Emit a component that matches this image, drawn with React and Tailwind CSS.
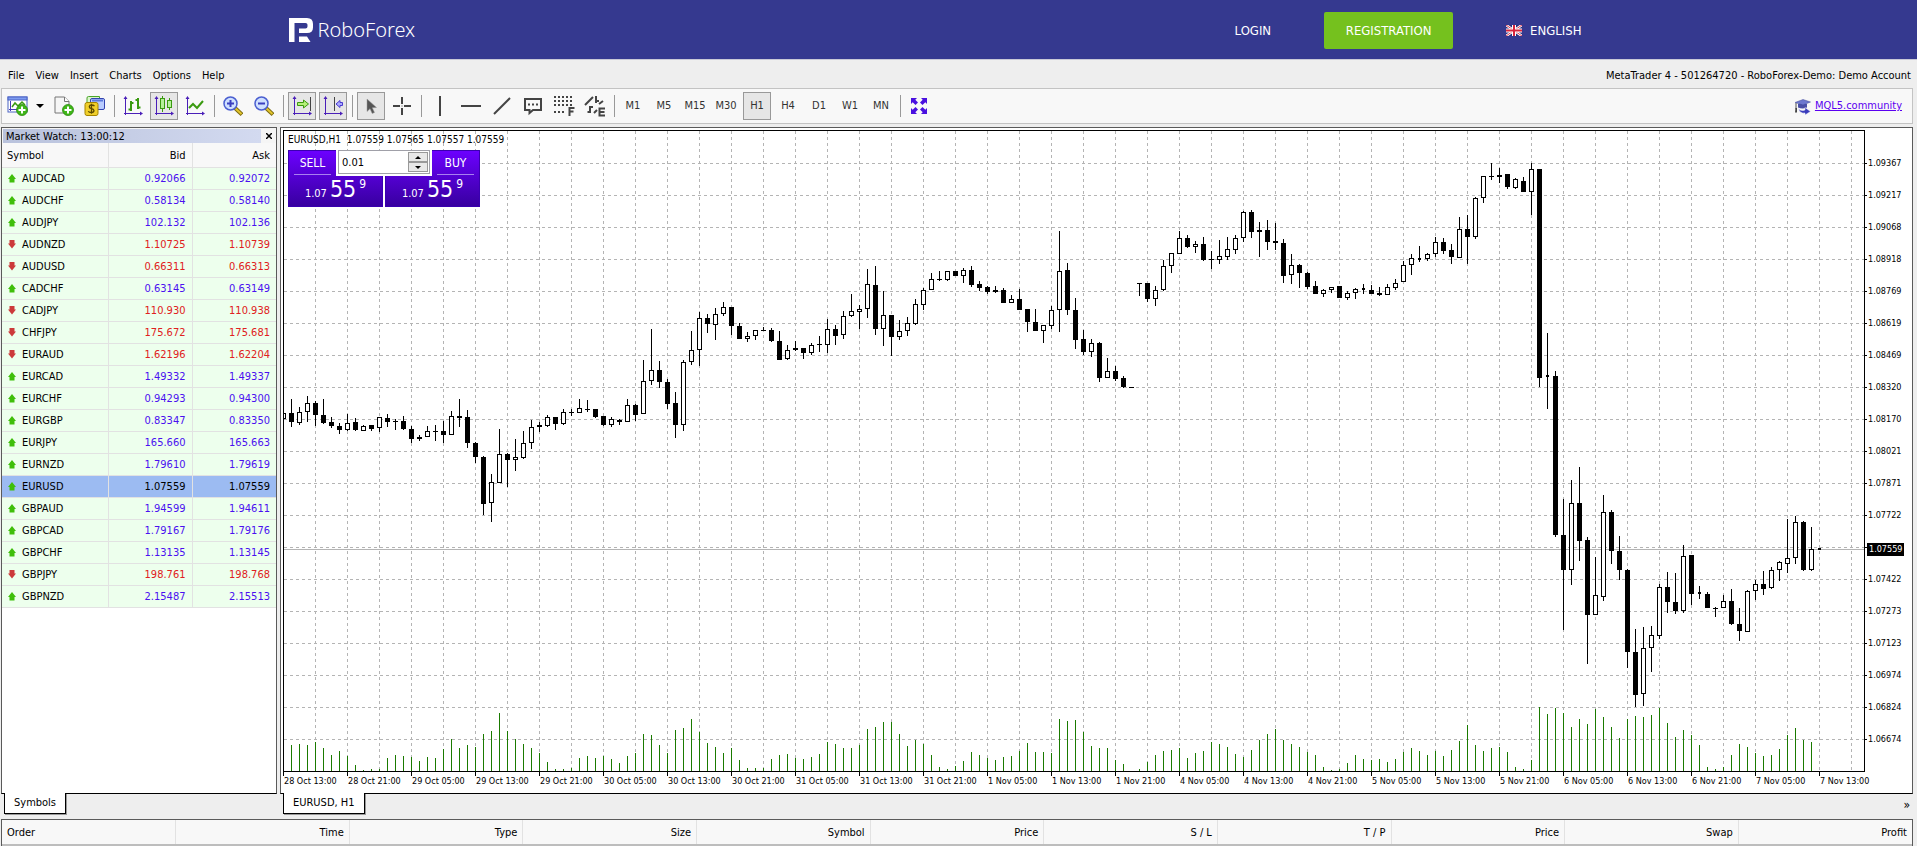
import React, { useState } from 'react';
import clsx from 'clsx';

const QUOTES = [
    ['AUDCAD', '0.92066', '0.92072', 'up'],
    ['AUDCHF', '0.58134', '0.58140', 'up'],
    ['AUDJPY', '102.132', '102.136', 'up'],
    ['AUDNZD', '1.10725', '1.10739', 'down'],
    ['AUDUSD', '0.66311', '0.66313', 'down'],
    ['CADCHF', '0.63145', '0.63149', 'up'],
    ['CADJPY', '110.930', '110.938', 'down'],
    ['CHFJPY', '175.672', '175.681', 'down'],
    ['EURAUD', '1.62196', '1.62204', 'down'],
    ['EURCAD', '1.49332', '1.49337', 'up'],
    ['EURCHF', '0.94293', '0.94300', 'up'],
    ['EURGBP', '0.83347', '0.83350', 'up'],
    ['EURJPY', '165.660', '165.663', 'up'],
    ['EURNZD', '1.79610', '1.79619', 'up'],
    ['EURUSD', '1.07559', '1.07559', 'up'],
    ['GBPAUD', '1.94599', '1.94611', 'up'],
    ['GBPCAD', '1.79167', '1.79176', 'up'],
    ['GBPCHF', '1.13135', '1.13145', 'up'],
    ['GBPJPY', '198.761', '198.768', 'down'],
    ['GBPNZD', '2.15487', '2.15513', 'up'],
];

const PRICES = [
    '1.09367', '1.09217', '1.09068', '1.08918', '1.08769', '1.08619', '1.08469', '1.08320', '1.08170', '1.08021',
    '1.07871', '1.07722', '1.07572', '1.07422', '1.07273', '1.07123', '1.06974', '1.06824', '1.06674',
];

const TIMES = [
    '28 Oct 13:00', '28 Oct 21:00', '29 Oct 05:00', '29 Oct 13:00', '29 Oct 21:00', '30 Oct 05:00', '30 Oct 13:00',
    '30 Oct 21:00', '31 Oct 05:00', '31 Oct 13:00', '31 Oct 21:00', '1 Nov 05:00', '1 Nov 13:00', '1 Nov 21:00',
    '4 Nov 05:00', '4 Nov 13:00', '4 Nov 21:00', '5 Nov 05:00', '5 Nov 13:00', '5 Nov 21:00', '6 Nov 05:00',
    '6 Nov 13:00', '6 Nov 21:00', '7 Nov 05:00', '7 Nov 13:00',
];

const COLUMNS = ['Order', 'Time', 'Type', 'Size', 'Symbol', 'Price', 'S / L', 'T / P', 'Price', 'Swap', 'Profit'];

// [high, body top, body bottom, low, kind] in chart units; kind: 1 = rising, 0 = falling, 2 = narrow body
const CANDLES = [
    [282, 282, 288, 288, 1], [268, 282, 291, 296, 0], [276, 281, 292, 294, 1], [265, 272, 281, 291, 1], [270, 272, 284, 295, 0],
    [268, 284, 292, 293, 0], [286, 291, 295, 297, 0], [292, 295, 299, 303, 0], [283, 292, 299, 300, 1], [287, 291, 299, 300, 0],
    [294, 295, 300, 300, 1], [294, 294, 298, 300, 0], [286, 286, 297, 301, 1], [283, 287, 291, 296, 0], [288, 290, 291, 299, 0],
    [285, 290, 298, 299, 0], [295, 298, 308, 312, 0], [304, 306, 308, 310, 0], [295, 300, 306, 306, 1], [294, 300, 301, 310, 0],
    [290, 300, 304, 312, 0], [280, 285, 304, 304, 1], [268, 285, 287, 296, 0], [279, 286, 312, 317, 0], [311, 312, 326, 332, 0],
    [325, 326, 373, 384, 0], [343, 351, 372, 391, 1], [298, 323, 352, 352, 1], [322, 323, 329, 356, 0], [308, 326, 329, 340, 1],
    [300, 312, 327, 328, 1], [289, 296, 312, 318, 1], [291, 294, 296, 301, 0], [284, 286, 295, 296, 1], [286, 286, 293, 299, 0],
    [278, 281, 293, 294, 1], [278, 281, 282, 285, 0], [268, 277, 282, 282, 1], [269, 278, 279, 281, 0], [278, 278, 286, 287, 0],
    [285, 285, 294, 295, 0], [286, 288, 294, 296, 1], [288, 289, 291, 294, 0], [268, 274, 291, 291, 1], [273, 274, 284, 290, 0],
    [229, 250, 283, 283, 1], [198, 239, 250, 254, 1], [230, 239, 251, 257, 0], [248, 251, 273, 278, 0], [261, 272, 294, 307, 0],
    [229, 231, 294, 300, 1], [200, 219, 231, 234, 1], [181, 187, 219, 235, 1], [183, 187, 193, 202, 0], [177, 183, 194, 209, 1],
    [171, 176, 183, 185, 1], [176, 176, 195, 204, 0], [192, 195, 208, 208, 0], [201, 205, 208, 211, 1], [199, 199, 205, 209, 1],
    [196, 199, 200, 200, 0], [197, 199, 210, 211, 0], [200, 210, 229, 229, 0], [214, 219, 228, 229, 1], [210, 217, 219, 220, 0],
    [217, 217, 222, 228, 0], [212, 214, 222, 224, 1], [205, 213, 214, 221, 0], [188, 198, 214, 222, 1], [194, 198, 205, 214, 0],
    [180, 185, 204, 208, 1], [163, 180, 185, 186, 1], [174, 178, 181, 198, 1], [138, 153, 178, 187, 1], [135, 154, 198, 204, 0],
    [160, 184, 198, 215, 1], [184, 184, 206, 225, 0], [189, 200, 206, 209, 1], [186, 192, 200, 205, 1], [168, 173, 193, 194, 1],
    [157, 159, 174, 179, 1], [142, 148, 159, 159, 1], [140, 148, 149, 150, 0], [140, 140, 149, 150, 1], [140, 140, 145, 145, 0],
    [137, 139, 145, 152, 1], [135, 139, 154, 156, 0], [150, 153, 157, 160, 0], [155, 156, 161, 163, 0], [155, 159, 161, 162, 0],
    [157, 159, 172, 172, 0], [164, 168, 172, 172, 1], [158, 168, 179, 179, 0], [178, 178, 191, 201, 0], [178, 191, 200, 200, 0],
    [194, 194, 200, 212, 1], [175, 179, 195, 198, 1], [100, 140, 179, 201, 1], [132, 139, 179, 184, 0], [167, 179, 209, 218, 0],
    [199, 208, 221, 224, 0], [208, 212, 221, 226, 1], [211, 212, 247, 251, 0], [227, 240, 247, 247, 1], [235, 240, 248, 250, 0],
    [245, 247, 256, 257, 0], [256, 256, 257, 257, 0], [152, 152, 153, 165, 0], [152, 152, 168, 171, 0], [155, 159, 168, 175, 1],
    [129, 135, 159, 160, 1], [122, 122, 135, 142, 1], [100, 107, 123, 123, 1], [104, 107, 116, 117, 0], [110, 113, 116, 122, 1],
    [106, 113, 129, 130, 0], [120, 128, 129, 138, 0], [109, 125, 129, 133, 1], [106, 118, 126, 129, 1], [104, 107, 119, 123, 1],
    [80, 81, 107, 111, 1], [79, 81, 101, 107, 0], [91, 99, 101, 126, 0], [89, 99, 111, 119, 0], [92, 110, 112, 119, 0],
    [108, 112, 145, 152, 0], [123, 134, 144, 153, 1], [133, 134, 142, 157, 0], [141, 142, 156, 158, 0], [150, 155, 163, 163, 0],
    [158, 159, 163, 166, 1], [156, 156, 159, 162, 1], [155, 155, 167, 167, 0], [160, 162, 167, 169, 1], [157, 158, 162, 168, 1],
    [153, 157, 159, 163, 2], [154, 159, 163, 163, 0], [156, 162, 164, 165, 0], [153, 156, 164, 164, 1], [148, 152, 157, 159, 1],
    [130, 134, 151, 151, 1], [123, 127, 134, 144, 1], [115, 127, 129, 131, 2], [122, 123, 128, 130, 1], [106, 111, 123, 126, 1],
    [107, 111, 120, 123, 0], [113, 119, 126, 133, 0], [86, 98, 127, 127, 1], [84, 98, 106, 133, 0], [66, 67, 106, 108, 1],
    [45, 45, 67, 72, 1], [32, 45, 46, 49, 0], [37, 44, 46, 52, 0], [43, 43, 56, 58, 0], [47, 48, 57, 58, 1],
    [46, 50, 61, 61, 0], [32, 38, 61, 84, 1], [38, 38, 247, 256, 0], [202, 244, 246, 278, 2], [240, 245, 404, 406, 0],
    [368, 404, 439, 499, 0], [349, 372, 439, 454, 1], [336, 372, 410, 430, 0], [406, 409, 484, 533, 0], [426, 464, 484, 484, 1],
    [364, 381, 466, 470, 1], [379, 381, 420, 433, 0], [405, 420, 439, 449, 0], [438, 439, 521, 537, 0], [498, 521, 564, 576, 0],
    [496, 517, 563, 575, 1], [495, 504, 517, 541, 1], [453, 456, 505, 508, 1], [441, 456, 471, 482, 0], [442, 471, 480, 483, 0],
    [414, 425, 480, 482, 1], [424, 424, 463, 474, 0], [455, 461, 463, 468, 2], [461, 463, 477, 477, 0], [476, 477, 478, 486, 0],
    [464, 470, 477, 477, 1], [458, 470, 493, 494, 0], [477, 493, 500, 510, 0], [459, 460, 501, 501, 1], [449, 453, 460, 469, 1],
    [440, 453, 458, 464, 0], [436, 439, 457, 458, 1], [430, 431, 439, 450, 1], [388, 427, 433, 442, 1], [385, 391, 427, 433, 1],
    [390, 391, 439, 440, 0], [396, 418, 439, 440, 1], [417, 417, 419, 419, 2],
];

const VOLUMES = [
    0, 26, 27, 26, 29, 23, 16, 20, 15, 6, 1, 2, 2, 13, 16, 15, 14, 10, 14, 13, 22, 32, 23, 26, 24, 37, 40, 58, 40, 32, 27, 23,
    18, 9, 2, 2, 3, 13, 15, 13, 15, 12, 8, 15, 18, 37, 36, 26, 18, 41, 43, 52, 39, 28, 24, 18, 23, 11, 3, 3, 3, 12, 16, 17,
    13, 12, 14, 17, 29, 27, 23, 23, 26, 42, 44, 49, 49, 37, 25, 31, 27, 16, 4, 2, 5, 10, 19, 16, 13, 11, 14, 15, 20, 28, 19,
    19, 18, 52, 50, 51, 39, 25, 23, 23, 11, 7, 0, 2, 9, 16, 20, 21, 23, 13, 18, 20, 29, 27, 24, 17, 14, 21, 31, 37, 42, 31,
    27, 24, 19, 16, 4, 1, 2, 8, 16, 12, 11, 12, 9, 12, 19, 23, 20, 16, 20, 15, 21, 30, 46, 26, 20, 23, 24, 19, 4, 2, 11, 64,
    57, 63, 58, 44, 52, 47, 62, 54, 44, 33, 52, 55, 54, 56, 63, 48, 34, 41, 36, 26, 4, 2, 4, 16, 27, 24, 18, 15, 16, 22, 36,
    43, 31, 29, 0,
];

/* ---------- toolbar icons ---------- */

const Plus = ({ cx, cy }) => (
    <g>
        <circle cx={cx} cy={cy} r="5.5" fill="#3fb618" stroke="#2a8a0c" strokeWidth="0.8" />
        <path d={`M${cx - 3.5} ${cy}h7M${cx} ${cy - 3.5}v7`} stroke="#fff" strokeWidth="2" />
    </g>
);

const NewChartIcon = () => (
    <svg width="22" height="20" viewBox="0 0 22 20">
        <rect x="1" y="1" width="19" height="15" fill="#fff" stroke="#4b63c4" />
        <rect x="1" y="1" width="19" height="3" fill="#7f9cf0" stroke="#4b63c4" />
        <path d="M3.5 5v10M2 13.5h16" stroke="#4a3ab8" fill="none" />
        <path d="M5 11l3-4 3 3 4-4 3 3" stroke="#3a9a10" strokeWidth="1.5" fill="none" />
        <Plus cx={15} cy={14} />
    </svg>
);

const NewOrderIcon = () => (
    <svg width="20" height="20" viewBox="0 0 20 20">
        <path d="M1 1h9.500l4.500 4.500V17H1z" fill="#f6f6f6" stroke="#777" />
        <path d="M10.500 1v4.500H15" fill="#fff" stroke="#777" />
        <Plus cx={14} cy={14} />
    </svg>
);

const TradeIcon = () => (
    <svg width="22" height="20" viewBox="0 0 22 20">
        <path d="M3 7V2q0-1.500 1.500-1.500h11V8z" fill="#d9f5c9" stroke="#4aa52a" />
        <rect x="6.500" y="2.500" width="14" height="11" rx="1.500" fill="#b9ccff" stroke="#3344b0" />
        <path d="M8 4.500h11" stroke="#5a78dc" strokeWidth="2" />
        <rect x="1" y="6.500" width="13" height="13" rx="2" fill="#f0cf2a" stroke="#a58400" />
        <path d="M10.500 10.200q-1-1.200-3-1.200t-2.200 1.700q0 1.500 2.200 1.900t2.500 2q0 1.900-2.500 1.900t-3.200-1.300M7.500 7.800v10" fill="none" stroke="#5c4a00" strokeWidth="1.300" />
    </svg>
);

const Axes = () => (
    <>
        <path d="M2.500 2v17M1 17.500h17" stroke="#4a1fb8" fill="none" />
        <path d="M2.500 0l2 3h-4zM20 17.500l-3 2v-4z" fill="#4a1fb8" />
    </>
);

const BarsIcon = () => (
    <svg width="20" height="20" viewBox="0 0 20 20">
        <Axes />
        <path d="M8 5v10M5.500 13.500H8M8 7h2.500M15 2v11M12.500 4H15M15 11.500h2.500" stroke="#3a9a10" strokeWidth="2" fill="none" />
    </svg>
);

const CandlesIcon = () => (
    <svg width="20" height="20" viewBox="0 0 20 20">
        <Axes />
        <path d="M8.500 0v16M15.500 2v12" stroke="#3a9a10" />
        <rect x="6.500" y="2.500" width="4" height="10" fill="#b5f09a" stroke="#3a9a10" />
        <rect x="13.500" y="4.500" width="4" height="7" fill="#b5f09a" stroke="#3a9a10" />
    </svg>
);

const LineIcon = () => (
    <svg width="20" height="20" viewBox="0 0 20 20">
        <Axes />
        <path d="M4 12l4-4 4 4 6-7" stroke="#3a9a10" strokeWidth="2" fill="none" />
    </svg>
);

const ZoomIcon = ({ plus }) => (
    <svg width="20" height="20" viewBox="0 0 20 20">
        <path d="M12 12l7 6.500" stroke="#7c6a10" strokeWidth="4" />
        <path d="M12 12l6.500 6" stroke="#e3c52c" strokeWidth="2" />
        <circle cx="7.500" cy="7.500" r="6.500" fill="#cfe0ff" stroke="#4b5fd0" strokeWidth="1.500" />
        <path d={plus ? 'M4 7.500h7M7.500 4v7' : 'M4 7.500h7'} stroke="#3a3fc0" strokeWidth="2" />
    </svg>
);

const AutoScrollIcon = () => (
    <svg width="20" height="20" viewBox="0 0 20 20">
        <Axes />
        <path d="M18.500 1v14" stroke="#444" />
        <path d="M5.500 6.500h6V4l5 4-5 4V9.500h-6z" fill="#b5f07a" stroke="#3a9a10" />
    </svg>
);

const ShiftIcon = () => (
    <svg width="20" height="20" viewBox="0 0 20 20">
        <Axes />
        <path d="M11.500 1v14" stroke="#444" />
        <path d="M19.500 6.500h-2.500V4.500l-4 3.500 4 3.500V9.500h2.500z" fill="#a9a9ff" stroke="#4a3ad0" />
    </svg>
);

const CursorIcon = () => (
    <svg width="20" height="20" viewBox="0 0 20 20">
        <path d="M6 3v12.500l3-2.800 2.200 4.800 2.300-1-2.200-4.700 4.200-.3z" fill="#555" stroke="#999" strokeWidth="0.500" />
    </svg>
);

const CrosshairIcon = () => (
    <svg width="20" height="20" viewBox="0 0 20 20">
        <path d="M10 1v7M10 12v7M1 10h7M12 10h7" stroke="#444" strokeWidth="2" />
        <rect x="9.500" y="9.500" width="1" height="1" fill="#444" />
    </svg>
);

const VLineIcon = () => <svg width="20" height="20" viewBox="0 0 20 20"><path d="M10 0v20" stroke="#444" strokeWidth="2" /></svg>;
const HLineIcon = () => <svg width="20" height="20" viewBox="0 0 20 20"><path d="M0 10h20" stroke="#444" strokeWidth="2" /></svg>;
const TrendIcon = () => <svg width="20" height="20" viewBox="0 0 20 20"><path d="M2 18L18 2" stroke="#444" strokeWidth="2" /></svg>;

const TextIcon = () => (
    <svg width="20" height="20" viewBox="0 0 20 20">
        <path d="M2 3h16v11H10l-3.500 3v-3H2z" fill="none" stroke="#444" strokeWidth="2" />
        <path d="M5 8.500h2M9 8.500h2M13 8.500h2" stroke="#444" strokeWidth="2" />
    </svg>
);

const FiboIcon = () => (
    <svg width="22" height="22" viewBox="0 0 22 22">
        <path d="M1 2h19M1 6h19M1 10h19M1 17h12" stroke="#444" strokeWidth="2" strokeDasharray="2 2" fill="none" />
        <path d="M16.500 21v-8h5M16.500 16.500h4" stroke="#444" strokeWidth="2" fill="none" />
    </svg>
);

const ObjectsIcon = () => (
    <svg width="22" height="22" viewBox="0 0 22 22">
        <path d="M1 10l8-8M12 1v7M12 6h3M6 11v7M3.500 17H6M6 12h3M15 9l4-3M10 18l3-3" stroke="#444" strokeWidth="2" fill="none" />
        <path d="M21 13.500h-5.500v7H21M15.500 17h5" stroke="#444" strokeWidth="2" fill="none" />
    </svg>
);

const FullscreenIcon = () => (
    <svg width="16" height="16" viewBox="0 0 16 16" fill="#4a10e0">
        <path d="M0 0h6L4.300 1.700 7 4.500 4.500 7 1.700 4.300 0 6zM16 0v6l-1.700-1.700L11.500 7 9 4.500l2.700-2.800L10 0zM0 16v-6l1.700 1.700L4.500 9 7 11.500l-2.700 2.800L6 16zM16 16h-6l1.700-1.700L9 11.500 11.500 9l2.800 2.700L16 10z" />
    </svg>
);

const MqlIcon = () => (
    <svg width="17" height="16" viewBox="0 0 17 16">
        <path d="M4 5v3.500q4.500 2 9 0V5z" fill="#4a50a8" />
        <path d="M9 0.500L16.500 3 9 6 1 3.500z" fill="#6d78cf" stroke="#3f4796" strokeWidth="0.500" />
        <path d="M2 4v6" stroke="#555" />
        <path d="M1.500 9h1.500v4.500H1z" fill="#444" />
        <path d="M4.500 9.500q2 3 6.500 1.500V8.500l5.500 4L11 16v-2q-5 1-6.500-4.500z" fill="#3a3cbc" stroke="#f8f8f8" strokeWidth="0.500" />
    </svg>
);

const FlagIcon = () => (
    <svg width="16" height="11" viewBox="0 0 16 11">
        <rect width="16" height="11" fill="#2b2f7c" />
        <path d="M0 0l16 11M16 0L0 11" stroke="#fff" strokeWidth="2.600" />
        <path d="M0 0l16 11M16 0L0 11" stroke="#d8243c" strokeWidth="0.900" />
        <path d="M8 0v11M0 5.500h16" stroke="#fff" strokeWidth="4" />
        <path d="M8 0v11M0 5.500h16" stroke="#d8243c" strokeWidth="2" />
    </svg>
);

const LogoMark = () => (
    <svg width="24" height="24" viewBox="0 0 24 24" fill="#fff">
        <path d="M0 0h18q6 0 6 6v3.500q0 5.500-6 5.500h-8v-4.500h6.500q2 0 2-2V6.800q0-1.800-2-1.800H5.500v19H0z" />
        <path d="M10 18.500h8l3.500 5.500H10z" />
    </svg>
);

const Arrow = ({ dir }) => (
    <svg width="8" height="9" viewBox="0 0 8 9" className="shrink-0">
        {dir === 'up'
            ? <path d="M4 0l4 5H6.500v3.500h-5V5H0z" fill="#3fbf0a" />
            : <path d="M4 8.500L8 3.500H6.500V0h-5v3.500H0z" fill="#cc3a3a" />}
    </svg>
);

/* ---------- toolbar ---------- */

const ToolButton = ({ label, active, children }) => (
    <button
        type="button"
        aria-label={label}
        className={clsx(
            'flex h-7 w-7 shrink-0 items-center justify-center text-[11px] text-[#333]',
            active && 'border border-[#999] bg-[#e6e6e6]'
        )}
    >
        {children}
    </button>
);

const Separator = () => (
    <div className="flex w-1 shrink-0 justify-center">
        <div className="h-[22px] w-px bg-[#999]" />
    </div>
);

const Toolbar = () => {
    const frames = ['M1', 'M5', 'M15', 'M30', 'H1', 'H4', 'D1', 'W1', 'MN'];
    return (
        <div className="ml-px mr-[4px] flex h-9 items-center gap-[3px] border border-[#c3c3c3] bg-[#f8f8f8] pl-[2px]">
            <div className="flex">
                <ToolButton label="New chart"><NewChartIcon /></ToolButton>
                <button type="button" aria-label="Chart list" className="flex w-[15px] items-center justify-center">
                    <svg width="8" height="4" viewBox="0 0 8 4"><path d="M0 0h8L4 4z" /></svg>
                </button>
            </div>
            <ToolButton label="New order"><NewOrderIcon /></ToolButton>
            <ToolButton label="Trade"><TradeIcon /></ToolButton>
            <Separator />
            <ToolButton label="Bar chart"><BarsIcon /></ToolButton>
            <ToolButton label="Candlesticks" active><CandlesIcon /></ToolButton>
            <ToolButton label="Line chart"><LineIcon /></ToolButton>
            <Separator />
            <ToolButton label="Zoom in"><ZoomIcon plus /></ToolButton>
            <ToolButton label="Zoom out"><ZoomIcon /></ToolButton>
            <Separator />
            <ToolButton label="Auto scroll" active><AutoScrollIcon /></ToolButton>
            <ToolButton label="Chart shift" active><ShiftIcon /></ToolButton>
            <Separator />
            <ToolButton label="Cursor" active><CursorIcon /></ToolButton>
            <ToolButton label="Crosshair"><CrosshairIcon /></ToolButton>
            <Separator />
            <ToolButton label="Vertical line"><VLineIcon /></ToolButton>
            <ToolButton label="Horizontal line"><HLineIcon /></ToolButton>
            <ToolButton label="Trendline"><TrendIcon /></ToolButton>
            <ToolButton label="Text"><TextIcon /></ToolButton>
            <ToolButton label="Fibonacci"><FiboIcon /></ToolButton>
            <ToolButton label="Objects"><ObjectsIcon /></ToolButton>
            <Separator />
            {frames.map((f) => (
                <ToolButton key={f} label={f} active={f === 'H1'}>{f}</ToolButton>
            ))}
            <Separator />
            <ToolButton label="Fullscreen"><FullscreenIcon /></ToolButton>
            <a href="#mql5" className="ml-auto mr-[10px] flex items-center gap-1 pt-px text-[11px] text-[#5a00f0] underline">
                <MqlIcon />
                MQL5.community
            </a>
        </div>
    );
};

/* ---------- panels ---------- */

const Tab = ({ children }) => (
    <button
        type="button"
        className="relative -mt-px ml-[3px] h-[21px] self-start border border-t-0 border-black bg-white px-[9px] pt-px text-[11px] shadow-[1px_1px_0_#999]"
    >
        {children}
    </button>
);

const MarketWatch = () => (
    <section className="flex w-[276px] shrink-0 flex-col">
        <div className="flex-1 overflow-hidden border border-b-black border-[#5a5a5a] bg-white">
            <div className="flex h-[15px] items-center bg-[#f5f5f5] pl-px">
                <h2 className="h-[14px] flex-1 bg-linear-to-r from-[#b9c2dc] to-[#d3daf0] pl-[3px] text-[11px] leading-[15px]">
                    Market Watch: 13:00:12
                </h2>
                <button type="button" aria-label="Close" className="flex w-[15px] justify-center">
                    <svg width="6" height="6" viewBox="0 0 6 6"><path d="M0 0l6 6M6 0L0 6" stroke="#000" strokeWidth="1.500" /></svg>
                </button>
            </div>
            <table className="w-full table-fixed border-collapse text-[11px] leading-none">
                <colgroup>
                    <col />
                    <col className="w-[84px]" />
                    <col className="w-[84px]" />
                </colgroup>
                <thead>
                    <tr className="h-6 border-b border-[#e2e2e2] bg-[#f8f8f8]">
                        <th className="border-r border-[#e2e2e2] pl-[5px] pt-[2px] text-left font-normal">Symbol</th>
                        <th className="border-r border-[#e2e2e2] pr-[6px] pt-[2px] text-right font-normal">Bid</th>
                        <th className="pr-[6px] pt-[2px] text-right font-normal">Ask</th>
                    </tr>
                </thead>
                <tbody>
                    {QUOTES.map(([symbol, bid, ask, dir]) => {
                        const selected = symbol === 'EURUSD';
                        const color = selected ? 'text-black' : dir === 'up' ? 'text-[#4a10f0]' : 'text-[#e02020]';
                        return (
                            <tr key={symbol} className={clsx('h-[22px] border-b border-[#e2e2e2]', selected ? 'bg-[#9cbbf2]' : 'bg-[#edffed]')}>
                                <td className="border-r border-[#e2e2e2] pl-[6px]">
                                    <span className="flex items-center gap-[6px]">
                                        <Arrow dir={dir} />
                                        {symbol}
                                    </span>
                                </td>
                                <td className={clsx('border-r border-[#e2e2e2] pr-[6px] text-right', color)}>{bid}</td>
                                <td className={clsx('pr-[6px] text-right', color)}>{ask}</td>
                            </tr>
                        );
                    })}
                </tbody>
            </table>
        </div>
        <Tab>Symbols</Tab>
    </section>
);

const Candle = ({ index, data }) => {
    const [high, top, bottom, low, kind] = data;
    const x = index * 8 - 1;
    const w = kind === 2 ? 3 : 5;
    return (
        <g>
            <rect x={x} y={high} width="1" height={low - high} />
            <rect x={x - (w - 1) / 2} y={top} width={w} height={bottom - top} />
            {kind === 1 && <rect x={x - 1} y={top + 1} width="3" height={bottom - top - 2} fill="#fff" />}
        </g>
    );
};

const Plot = () => (
    <svg className="absolute inset-0 h-full w-full" shapeRendering="crispEdges">
        <g stroke="#b4b4b4" strokeDasharray="3 3">
            {PRICES.map((p, i) => (
                <line key={p} x1="0" x2="100%" y1={i * 32 + 32.5} y2={i * 32 + 32.5} />
            ))}
            {Array.from({ length: 49 }, (_, i) => (
                <line key={i} x1={i * 32 + 31.5} x2={i * 32 + 31.5} y1="0" y2="100%" />
            ))}
        </g>
        <rect x="0" y="418" width="100%" height="1" fill="#b4b4b4" />
        <g fill="#1a7a00">
            {VOLUMES.map((v, i) => (
                <rect key={i} x={i * 8 - 1} y={640 - v} width="1" height={v} />
            ))}
        </g>
        {CANDLES.map((c, i) => (
            <Candle key={i} index={i} data={c} />
        ))}
    </svg>
);

const DealSide = ({ title, right }) => (
    <button
        type="button"
        className={clsx(
            'flex h-[57px] w-[95px] flex-col border border-[#3a00b0] bg-linear-to-b from-[#6c00ff] to-[#3800a0] text-white',
            right ? 'items-end' : 'items-start'
        )}
    >
        <span className="mx-[5px] flex h-6 w-[37px] items-center justify-center border-b border-[#a880f0] text-[12px] font-medium">{title}</span>
        <span className="flex h-[31px] w-full justify-center gap-[3px] leading-none">
            <span className="pt-[13px] text-[11px]">1.07</span>
            <span className="pt-[3px] text-[23px]">55</span>
            <span className="pt-[3px] text-[12px]">9</span>
        </span>
    </button>
);

const DealPanel = () => {
    const [lots, setLots] = useState('0.01');
    return (
        <div className="absolute left-1 top-[19px] flex gap-[2px] bg-white">
            <DealSide title="SELL" />
            <DealSide title="BUY" right />
            <div className="absolute left-12 top-0 flex h-[26px] w-24 items-start bg-white px-[2px]">
                <div className="flex h-6 w-full border border-[#a0a0a8] p-px">
                    <input
                        aria-label="Volume"
                        value={lots}
                        onChange={(e) => setLots(e.target.value)}
                        className="w-0 flex-1 pl-[2px] pt-[2px] text-[11px] outline-none"
                    />
                    <div className="flex w-5 flex-col">
                        <button type="button" aria-label="Increase" className="flex flex-1 items-center justify-center border border-[#999] bg-[#e8e8e8]">
                            <svg width="6" height="3" viewBox="0 0 6 3"><path d="M0 3h6L3 0z" /></svg>
                        </button>
                        <button type="button" aria-label="Decrease" className="flex flex-1 items-center justify-center border border-[#999] bg-[#e8e8e8]">
                            <svg width="6" height="3" viewBox="0 0 6 3"><path d="M0 0h6L3 3z" /></svg>
                        </button>
                    </div>
                </div>
            </div>
        </div>
    );
};

const ChartPanel = () => (
    <section className="flex min-w-0 flex-1 flex-col">
        <div className="flex flex-1 flex-col overflow-hidden border border-b-black border-[#5a5a5a] bg-white pl-[2px] pt-[2px]">
            <div className="flex flex-1">
                <div className="relative flex-1 overflow-hidden border border-black">
                    <Plot />
                    <p className="absolute left-1 top-[2px] whitespace-pre text-[10px] leading-[14px]">
                        {'EURUSD,H1  1.07559 1.07565 1.07557 1.07559'}
                    </p>
                    <DealPanel />
                </div>
                {/* price scale */}
                <div className="relative w-[47px] shrink-0 pt-[17px] text-[9px] leading-none">
                    {PRICES.map((p) => (
                        <div key={p} className="flex h-8 items-center gap-px">
                            <span className="h-px w-[2px] bg-black" />
                            {p}
                        </div>
                    ))}
                    <span className="absolute left-[2px] top-[413px] bg-black px-[2px] py-[2px] text-white">1.07559</span>
                </div>
            </div>
            {/* time scale */}
            <div className="flex h-[21px] shrink-0 whitespace-nowrap text-[9px]">
                {TIMES.map((t) => (
                    <div key={t} className="w-16 shrink-0">
                        <div className="h-1 w-px bg-black" />
                        <div className="pl-px leading-[11px]">{t}</div>
                    </div>
                ))}
            </div>
        </div>
        <div className="flex justify-between">
            <Tab>EURUSD, H1</Tab>
            <button type="button" aria-label="More charts" className="pr-[3px] pt-[2px] text-[12px]">»</button>
        </div>
    </section>
);

const Terminal = () => (
    <section className="ml-px mr-[4px] shrink-0 border-x border-t border-[#5a5a5a]">
        <table className="w-full table-fixed border-collapse text-[11px]">
            <thead>
                <tr className="h-6 bg-[#f8f8f8]">
                    {COLUMNS.map((c, i) => (
                        <th
                            key={i}
                            className={clsx(
                                'px-[5px] font-normal leading-none',
                                i === 0 ? 'text-left' : 'text-right',
                                i < COLUMNS.length - 1 && 'border-r border-[#e2e2e2]'
                            )}
                        >
                            {c}
                        </th>
                    ))}
                </tr>
            </thead>
        </table>
        <div className="h-[2px] bg-[#bdbdbd]" />
    </section>
);

const Header = () => (
    <header className="h-[60px] shrink-0 border-b border-[#c9c9d6] bg-[#35398f] text-white">
        <div className="mx-auto flex h-full max-w-[1340px] items-center">
            <a href="#home" className="flex items-center gap-[5px]">
                <LogoMark />
                <span className="font-['Noto_Sans'] text-[20px] font-light leading-none">RoboForex</span>
            </a>
            <nav className="ml-auto mr-[47px] flex items-center gap-[53px] pt-[2px] text-[13px]">
                <a href="#login">LOGIN</a>
                <button type="button" className="h-[37px] w-[129px] rounded-[2px] bg-[#75c11e]">REGISTRATION</button>
                <a href="#language" className="flex items-center gap-2">
                    <FlagIcon />
                    ENGLISH
                </a>
            </nav>
        </div>
    </header>
);

const App = () => {
    const menu = ['File', 'View', 'Insert', 'Charts', 'Options', 'Help'];
    return (
        <div className="flex h-screen min-h-[700px] flex-col bg-[#eeeeee] font-['DejaVu_Sans_Condensed','DejaVu_Sans',sans-serif] text-black">
            <Header />
            <div className="flex h-7 shrink-0 items-center justify-between pl-2 pr-[6px] pt-1 text-[11px]">
                <nav className="flex gap-[11px]">
                    {menu.map((m) => (
                        <button key={m} type="button">{m}</button>
                    ))}
                </nav>
                <span>MetaTrader 4 - 501264720 - RoboForex-Demo: Demo Account</span>
            </div>
            <Toolbar />
            <main className="ml-px mr-[4px] mt-[3px] flex flex-1 gap-[3px] pb-[5px]">
                <MarketWatch />
                <ChartPanel />
            </main>
            <Terminal />
        </div>
    );
};

export default App;
